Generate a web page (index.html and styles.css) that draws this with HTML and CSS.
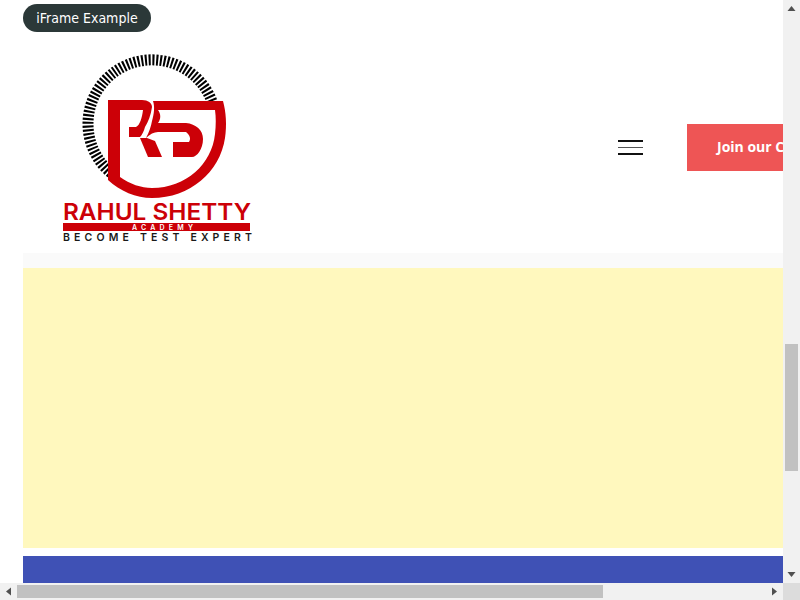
FILE: index.html
```html
<!DOCTYPE html>
<html lang="en">
<head>
<meta charset="utf-8">
<title>iFrame Example</title>
<link rel="stylesheet" href="styles.css">
</head>
<body>
<div class="window">
  <div class="top">
    <main class="page">
      <div class="pill">iFrame Example</div>
      <header class="site-header">
        <svg class="logo" viewBox="60 50 200 200" width="200" height="200" aria-label="Rahul Shetty Academy logo">
          <path class="ticks" pathLength="63" d="M111 173 A64 64 0 1 1 212.4 102.7"/>
          <path class="mark" d="M108 100 H142 C148 100 152 103 152 107 C151 115 148 122 145 127 C144 131 142 135 140 137 H129 V127 H136 C140 125 142 118 143 110 H120 V177 C130 184 141 188 152 188 C186 188 212 164 215 134 C216 125 216 117 215 110 H158 C161 114 161 119 158 123 H186 C196 124 203 130 203 139 C203 149 197 157 192 157 H173 V142 H189 C191 139 190 135 186 132 H158 C154 132 150 134 146 138 C149 132 151 127 152 121 C154 114 155 107 153 101 H223 C226 112 227 125 225 138 C220 172 190 198 152 198 C136 198 120 191 108 180 Z"/>
          <path class="mark" d="M140 138 L147 138 L155 141 L162 157 H148 Z"/>
          <text class="name" x="63" y="220" textLength="188" lengthAdjust="spacingAndGlyphs">RAHUL SHETTY</text>
          <rect class="band" x="63" y="223" width="187" height="8"/>
          <text class="academy" x="132" y="230" textLength="61">ACADEMY</text>
          <text class="tagline" x="63" y="241" textLength="189">BECOME TEST EXPERT</text>
        </svg>
        <button class="menu" aria-label="Menu"><span></span><span class="mid"></span><span></span></button>
        <a class="join">Join our Courses</a>
      </header>
      <div class="strip"></div>
      <section class="notice"></section>
      <section class="footer-bar"></section>
    </main>
    <div class="vbar">
      <svg class="arrow" viewBox="0 0 17 17" width="17" height="17"><path d="M8.5 6 L12.5 11 H4.5 Z"/></svg>
      <div class="vtrack"><div class="vthumb"></div></div>
      <svg class="arrow" viewBox="0 0 17 17" width="17" height="17"><path d="M8.5 11 L12.5 6 H4.5 Z"/></svg>
    </div>
  </div>
  <div class="hbar">
    <svg class="arrow" viewBox="0 0 17 17" width="17" height="17"><path d="M6 8.5 L11 4.5 V12.5 Z"/></svg>
    <div class="htrack"><div class="hthumb"></div></div>
    <svg class="arrow" viewBox="0 0 17 17" width="17" height="17"><path d="M11 8.5 L6 4.5 V12.5 Z"/></svg>
    <div class="corner"></div>
  </div>
</div>
</body>
</html>
```
FILE: styles.css
```css
* { box-sizing: border-box; }
html, body { margin: 0; height: 100%; overflow: hidden; background: #fff; }
.window { width: 800px; height: 600px; display: flex; flex-direction: column; }
.top { flex: 1; display: flex; min-height: 0; }
.page { width: 783px; padding: 4px 0 0 23px; overflow: hidden; display: flex; flex-direction: column; }
.pill {
  align-self: flex-start; width: 128px; height: 28px; border-radius: 14px;
  background: #2b3838; color: #fff; text-align: center;
  font: 14px/28px "DejaVu Sans Condensed", "DejaVu Sans", sans-serif;
}
.site-header { height: 221px; display: flex; align-items: flex-start; flex: none; }
.logo { display: block; margin: 18px 0 0 37px; flex: none; }
.ticks { fill: none; stroke: #000; stroke-width: 11; stroke-dasharray: .55 .45; }
.mark { fill: #cc0007; }
.name { font: 600 23.5px "Inter", sans-serif; fill: #cc0007; }
.band { fill: #cc0007; }
.academy { font: 600 7px "Inter", sans-serif; fill: #fff; }
.tagline { font: 600 10.5px "Inter", sans-serif; fill: #1a1a1a; }
.menu {
  margin: 108px 44px 0 auto; width: 25px; height: 15px; padding: 0; border: 0; background: none;
  display: flex; flex-direction: column; justify-content: space-between;
}
.menu span { display: block; height: 2px; background: #111; }
.menu .mid { height: 1px; background: #555; }
.join {
  flex: none; width: 96px; height: 47px; margin-top: 92px; padding-left: 30px;
  background: #ee5555; color: #fff; white-space: nowrap; overflow: hidden;
  font: 700 14px/46px "Open Sans", sans-serif;
}
.strip { height: 15px; flex: none; background: #fafafa; }
.notice { height: 280px; flex: none; background: #fff8be; }
.footer-bar { height: 27px; flex: none; margin-top: 8px; background: #3f51b5; }
.vbar { width: 17px; background: #f1f1f1; display: flex; flex-direction: column; }
.vtrack { flex: 1; padding: 327px 2px 0; }
.vthumb { height: 127px; background: #c1c1c1; }
.hbar { height: 17px; background: #f1f1f1; display: flex; }
.htrack { flex: 1; padding: 2px 0; }
.hthumb { width: 586px; height: 13px; background: #c1c1c1; }
.corner { width: 17px; background: #dcdcdc; }
.arrow { display: block; flex: none; }
.arrow path { fill: #505050; }
```
